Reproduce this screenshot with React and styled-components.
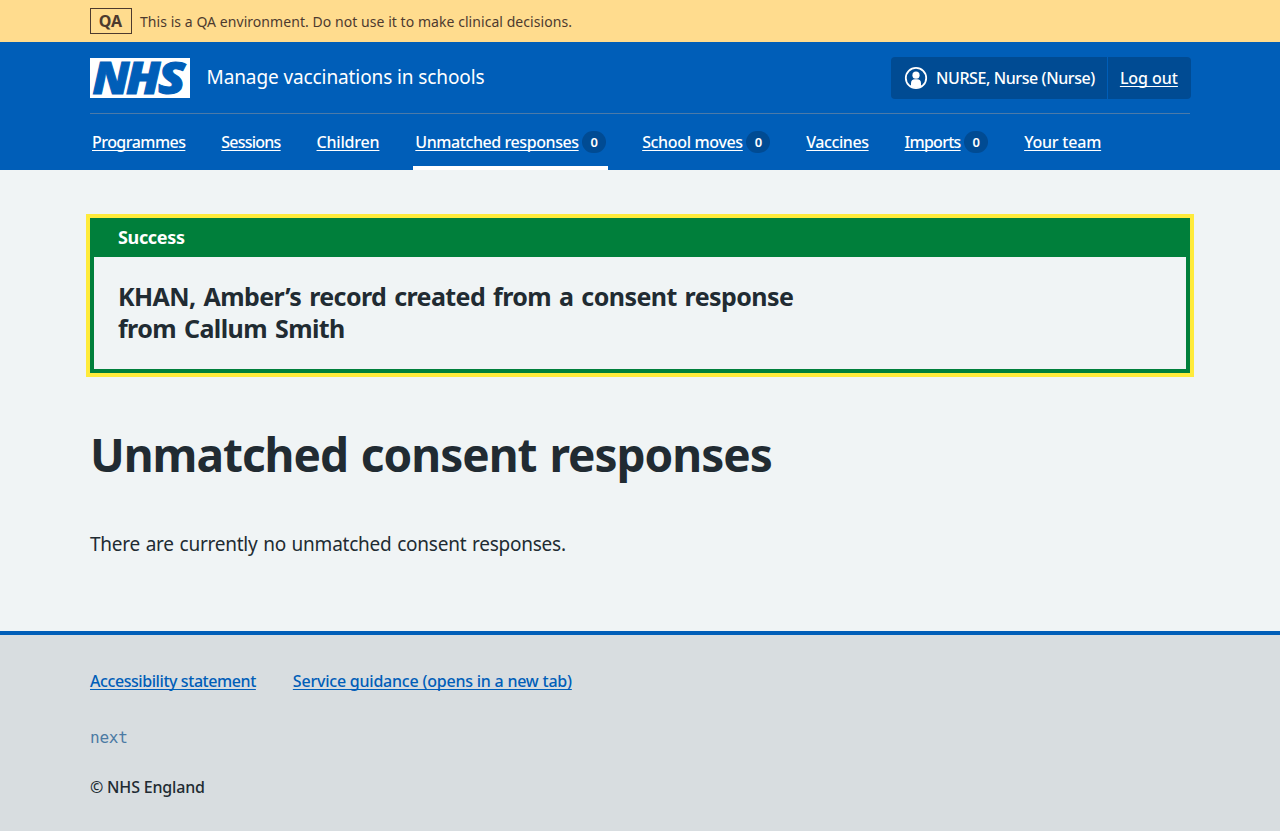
import React from "react";
import styled, { createGlobalStyle, css } from "styled-components";

const GlobalStyle = createGlobalStyle`
  *, *::before, *::after { box-sizing: border-box; }
  body {
    margin: 0;
    background: #f0f4f5;
    color: #212b32;
    font-family: "Noto Sans", "Open Sans", Arial, sans-serif;
    font-size: 16px;
    line-height: 24px;
  }
  h1, h2, h3, p { margin: 0; padding: 0; }
`;

const tracking = css`
  letter-spacing: ${(p) => p.$tracking ?? 0}px;
`;

const Container = styled.div`
  width: 1100px;
  margin: 0 auto;
`;

const EnvironmentBanner = styled.div`
  height: 42px;
  background: #ffdc8e;
  color: #4d3a2e;
`;

const EnvironmentRow = styled(Container)`
  height: 100%;
  display: flex;
  align-items: center;
  gap: 8px;
`;

const EnvironmentTag = styled.strong`
  width: 42px;
  height: 26px;
  padding-right: 1px;
  border: 1px solid #4d3a2e;
  font-weight: 700;
  line-height: 24px;
  text-align: center;
`;

const EnvironmentText = styled.span`
  padding-top: 2px;
  font-size: 14px;
  line-height: 20px;
  white-space: nowrap;
  ${tracking}
`;

const Header = styled.header`
  height: 128px;
  background: #005eb8;
  color: #fff;
`;

const HeaderTop = styled(Container)`
  height: 72px;
  display: flex;
  align-items: center;
  border-bottom: 1px solid #4c7aa8;
`;

const Logo = styled.svg`
  display: block;
  width: 100px;
  height: 40px;
  overflow: visible;
`;

const ServiceName = styled.span`
  margin-left: 16.5px;
  padding-bottom: 2px;
  font-size: 19px;
  line-height: 28px;
  white-space: nowrap;
  ${tracking}
`;

const Account = styled.div`
  display: flex;
  width: 300px;
  height: 42px;
  margin: 0 -1px 0 auto;
  border-radius: 4px;
  background: #004b93;
`;

const AccountItem = styled.div`
  display: flex;
  align-items: center;
  gap: 8px;
  padding: 0 12px 0 13px;
  white-space: nowrap;

  & + & {
    padding-left: 12px;
    border-left: 1px solid #005eb8;
  }
`;

const Label = styled.span`
  font-weight: 500;
  ${tracking}
`;

const Link = styled.a`
  color: ${(p) => p.$color ?? "#fff"};
  font-weight: 500;
  text-decoration: underline;
  text-decoration-thickness: 1px;
  text-decoration-skip-ink: none;
  text-underline-offset: 2px;
  white-space: nowrap;
  ${tracking}
`;

const Nav = styled(Container)`
  height: 56px;
  display: flex;
  gap: 31.9px;
`;

const NavItem = styled.div`
  display: flex;
  align-items: center;
  gap: 3.6px;
  padding: 4px 2px 0;
  border-bottom: 4px solid ${(p) => (p.$current ? "#fff" : "transparent")};
`;

const Count = styled.span`
  width: 24px;
  height: 22px;
  border-radius: 11px;
  background: #004b93;
  font-size: 13px;
  font-weight: 600;
  line-height: 23px;
  text-align: center;
`;

const Main = styled.main`
  width: 1100px;
  height: 461px;
  margin: 0 auto;
  padding-top: 48px;
`;

const Notification = styled.section`
  height: 155px;
  border: 4px solid #007f3b;
  box-shadow: 0 0 0 4px #ffeb3b;
`;

const NotificationTitle = styled.h2`
  height: 35px;
  padding: 1px 24px 0;
  background: #007f3b;
  color: #fff;
  font-size: 18px;
  font-weight: 700;
  line-height: 28px;
  ${tracking}
`;

const NotificationBody = styled.h3`
  padding: 23px 24px 24px;
  font-size: 25px;
  font-weight: 700;
  line-height: 32px;
  word-spacing: 2px;
  ${tracking}
`;

const PageTitle = styled.h1`
  margin-top: 53px;
  font-size: 46px;
  font-weight: 700;
  line-height: 56px;
  word-spacing: 2px;
  ${tracking}
`;

const Paragraph = styled.p`
  margin-top: 48px;
  font-size: 19px;
  line-height: 28px;
  word-spacing: 1px;
  ${tracking}
`;

const Footer = styled.footer`
  height: 200px;
  border-top: 4px solid #005eb8;
  background: #d8dde0;
`;

const FooterContent = styled(Container)`
  display: flex;
  flex-direction: column;
  padding-top: 34px;
`;

const FooterLinks = styled.div`
  display: flex;
  gap: 37px;
`;

const Release = styled.code`
  margin-top: 33px;
  color: #4c7aa4;
  font-family: "DejaVu Sans Mono", monospace;
  font-size: 16px;
  line-height: 24px;
  letter-spacing: -0.2px;
`;

const Copyright = styled.p`
  margin-top: 25px;
  font-weight: 500;
  ${tracking}
`;

const NAV_ITEMS = [
  { label: "Programmes", tracking: -0.54 },
  { label: "Sessions", tracking: -0.76 },
  { label: "Children", tracking: -0.19 },
  { label: "Unmatched responses", tracking: -0.42, count: 0, current: true },
  { label: "School moves", tracking: -0.34, count: 0 },
  { label: "Vaccines", tracking: -0.42 },
  { label: "Imports", tracking: -0.72, count: 0 },
  { label: "Your team", tracking: -0.21 },
];

const LOGO_LETTERS = [
  { char: "N", x: 2.5, width: 37 },
  { char: "H", x: 36, width: 34.5 },
  { char: "S", x: 68, width: 27.5 },
];

const NhsLogo = () => (
  <Logo viewBox="0 0 100 40" role="img" aria-label="NHS">
    <rect width="100" height="40" fill="#fff" />
    <g
      fill="#005eb8"
      stroke="#005eb8"
      strokeWidth="1"
      fontFamily="Noto Sans, Open Sans, sans-serif"
      fontSize="44.5"
      fontWeight="900"
      fontStyle="italic"
    >
      {LOGO_LETTERS.map(({ char, x, width }) => (
        <text key={char} x={x} y="36" textLength={width} lengthAdjust="spacingAndGlyphs">
          {char}
        </text>
      ))}
    </g>
  </Logo>
);

const UserIcon = () => (
  <svg width="24" height="24" viewBox="0 0 24 24" aria-hidden="true">
    <circle cx="12" cy="12" r="10.2" fill="none" stroke="#fff" strokeWidth="1.8" />
    <circle cx="12" cy="9.2" r="3.6" fill="#fff" />
    <path d="M7 20.5v-3.2a4 4 0 0 1 4-4h2a4 4 0 0 1 4 4v3.2a10 10 0 0 1-10 0z" fill="#fff" />
  </svg>
);

export default function App() {
  return (
    <>
      <GlobalStyle />
      <EnvironmentBanner>
        <EnvironmentRow>
          <EnvironmentTag>QA</EnvironmentTag>
          <EnvironmentText $tracking={0.055}>
            This is a QA environment. Do not use it to make clinical decisions.
          </EnvironmentText>
        </EnvironmentRow>
      </EnvironmentBanner>
      <Header>
        <HeaderTop>
          <NhsLogo />
          <ServiceName $tracking={-0.1}>Manage vaccinations in schools</ServiceName>
          <Account>
            <AccountItem>
              <UserIcon />
              <Label $tracking={-0.41}>NURSE, Nurse (Nurse)</Label>
            </AccountItem>
            <AccountItem>
              <Link $tracking={-0.05}>Log out</Link>
            </AccountItem>
          </Account>
        </HeaderTop>
        <Nav as="nav">
          {NAV_ITEMS.map((item) => (
            <NavItem key={item.label} $current={item.current}>
              <Link $tracking={item.tracking}>{item.label}</Link>
              {item.count !== undefined && <Count>{item.count}</Count>}
            </NavItem>
          ))}
        </Nav>
      </Header>
      <Main>
        <Notification>
          <NotificationTitle $tracking={-0.35}>Success</NotificationTitle>
          <NotificationBody $tracking={-0.58}>
            KHAN, Amber’s record created from a consent response
            <br />
            from Callum Smith
          </NotificationBody>
        </Notification>
        <PageTitle $tracking={-1.03}>Unmatched consent responses</PageTitle>
        <Paragraph $tracking={-0.24}>There are currently no unmatched consent responses.</Paragraph>
      </Main>
      <Footer>
        <FooterContent>
          <FooterLinks>
            <Link $color="#005eb8" $tracking={-0.43}>Accessibility statement</Link>
            <Link $color="#005eb8" $tracking={-0.22}>Service guidance (opens in a new tab)</Link>
          </FooterLinks>
          <Release>next</Release>
          <Copyright $tracking={-0.18}>© NHS England</Copyright>
        </FooterContent>
      </Footer>
    </>
  );
}
